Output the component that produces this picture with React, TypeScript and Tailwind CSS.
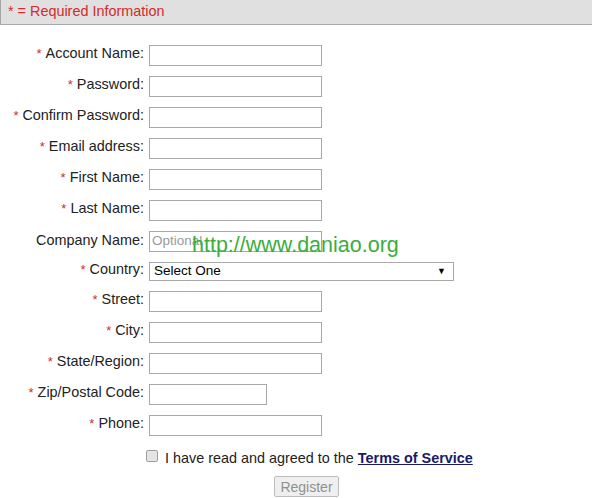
import React from "react";

type Field = {
  label: string;
  required: boolean;
  kind?: "input" | "select";
  width?: string;
  placeholder?: string;
};

const fields: Field[] = [
  { label: "Account Name:", required: true },
  { label: "Password:", required: true },
  { label: "Confirm Password:", required: true },
  { label: "Email address:", required: true },
  { label: "First Name:", required: true },
  { label: "Last Name:", required: true },
  { label: "Company Name:", required: false, placeholder: "Optional" },
  { label: "Country:", required: true, kind: "select" },
  { label: "Street:", required: true },
  { label: "City:", required: true },
  { label: "State/Region:", required: true },
  { label: "Zip/Postal Code:", required: true, width: "w-[118px]" },
  { label: "Phone:", required: true },
];

function FieldRow({ field }: { field: Field }) {
  return (
    <div className="flex items-center py-[5px]">
      <label className="w-[144px] shrink-0 pb-[4px] text-right text-[14.4px] leading-[14px] text-[#222]">
        {field.required && <span className="mr-[4px] text-[13px] text-[#c9302c]">*</span>}
        {field.label}
      </label>
      <div className="pl-[5px]">
        {field.kind === "select" ? (
          <div className="flex h-[19px] w-[305px] items-center justify-between border border-[#a9a9a9] bg-white pl-[4px] pr-[7px] text-[13.5px] text-black">
            <span>Select One</span>
            <span className="text-[9px] leading-none">▼</span>
          </div>
        ) : (
          <div
            className={`flex h-[21px] items-center border border-[#a9a9a9] bg-white pl-[2px] text-[13.5px] text-[#9a9a9a] ${
              field.width ?? "w-[173px]"
            }`}
          >
            {field.placeholder}
          </div>
        )}
      </div>
    </div>
  );
}

export default function App() {
  return (
    <div className="relative h-[498px] w-[592px] overflow-hidden bg-white font-['Liberation_Sans',Arial,sans-serif]">
      {/* Header bar */}
      <div className="flex h-[25px] items-center border-b border-l border-[#a6a6a6] bg-[#e0e0e0] pb-[1px] pl-[7px] text-[14.4px] text-[#d42a2a]">
        * = Required Information
      </div>

      {/* Form rows */}
      <div className="mt-[15px]">
        {fields.map((f) => (
          <FieldRow key={f.label} field={f} />
        ))}
      </div>

      {/* Terms */}
      <div className="mt-[5px] flex h-[20px] items-center pl-[146px] text-[14.4px] text-[#222]">
        <span className="h-[12px] w-[12px] rounded-[2px] border border-[#a0a0a0] bg-[#e4e4e4]" />
        <span className="ml-[7px] pt-[3px] leading-[16px]">
          I have read and agreed to the{" "}
          <span className="font-bold text-[#1a1a66] underline">Terms of Service</span>
        </span>
      </div>

      <div className="mt-[9px] pl-[274px]">
        <button className="h-[21px] w-[65px] rounded-[2px] border border-[#bdbdbd] bg-[#efefef] text-[14px] text-[#8f8f8f]">
          Register
        </button>
      </div>

      {/* Watermark */}
      <div className="absolute left-[192px] top-[233px] text-[21.5px] leading-[24px] text-[#3aae3a]">
        http://www.daniao.org
      </div>
    </div>
  );
}
